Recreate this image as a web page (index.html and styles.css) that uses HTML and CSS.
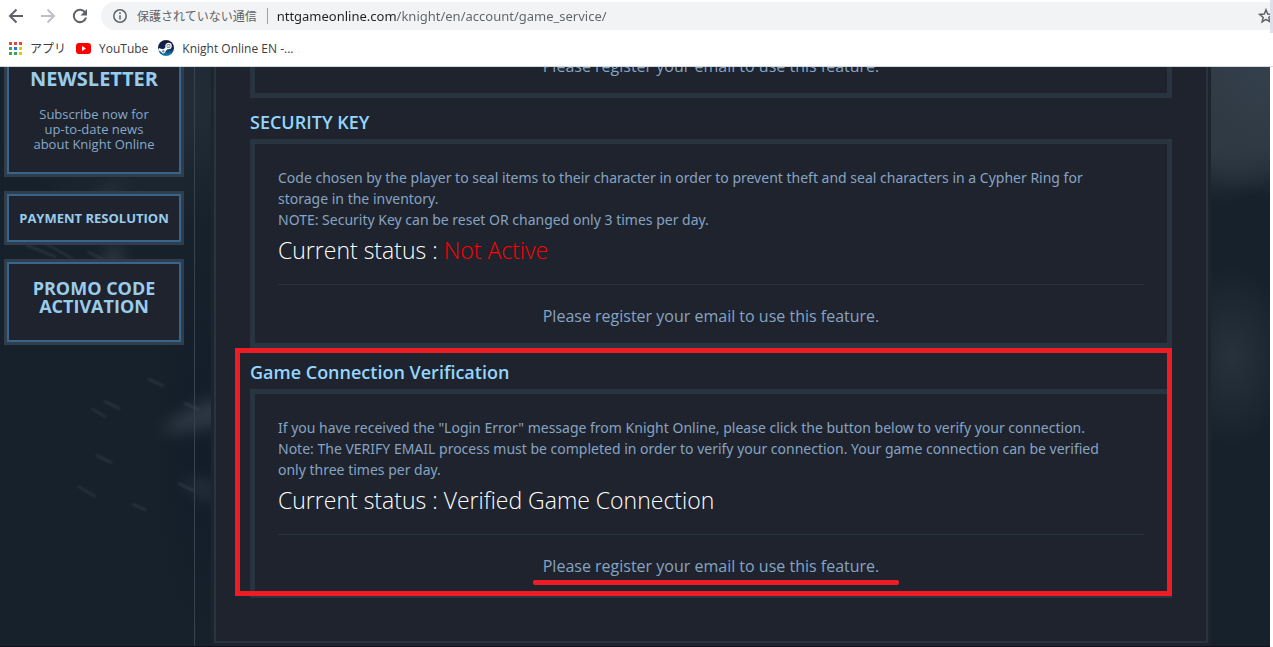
FILE: index.html
```
<!DOCTYPE html>
<html lang="en">
    <head>
        <meta charset="utf-8">
        <title>Knight Online - Game Service</title>
        <link rel="stylesheet" href="styles.css">
    </head>
    <body>
        <header class="browser">
            <div class="toolbar">
                <button class="nav_button" aria-label="Back">
                    <svg width="16" height="16" viewBox="0 0 16 16"><path d="M15 8H2M8.500 1.500L2 8l6.500 6.500" /></svg>
                </button>
                <button class="nav_button disabled" aria-label="Forward">
                    <svg width="16" height="16" viewBox="0 0 16 16"><path d="M1 8h13M7.500 1.500L14 8l-6.500 6.500" /></svg>
                </button>
                <button class="nav_button" aria-label="Reload">
                    <svg width="16" height="16" viewBox="0 0 16 16"><path d="M13.200 4.500A6.200 6.200 0 1 0 14 9.500" /><path class="fill" d="M15 1v6.500H8.500z" /></svg>
                </button>
                <div class="address">
                    <svg class="info" width="14" height="14" viewBox="0 0 14 14"><circle cx="7" cy="7" r="6.200" /><path d="M7 6.200v4.300M7 3.300v1.600" /></svg>
                    <label class="insecure" for="url">保護されていない通信</label>
                    <input type="text" class="url" id="url" value="nttgameonline.com/knight/en/account/game_service/">
                    <button class="star" aria-label="Bookmark">
                        <svg width="16" height="16" viewBox="0 0 16 16"><path d="M8 1.800l1.700 4.300 4.600.3-3.500 3 1.100 4.500L8 11.400l-3.900 2.500 1.100-4.500-3.500-3 4.600-.3z" /></svg>
                    </button>
                </div>
                <div class="edge"></div>
            </div>
            <nav class="bookmarks">
                <a href="#" class="bookmark apps">
                    <svg width="13" height="13" viewBox="0 0 13 13">
                        <path fill="#ea4335" d="M0 0h3v3H0zM5 0h3v3H5zM10 0h3v3h-3z" />
                        <path fill="#34a853" d="M0 5h3v3H0zM0 10h3v3H0zM5 10h3v3H5z" />
                        <path fill="#1a73e8" d="M5 5h3v3H5z" />
                        <path fill="#fbbc04" d="M10 5h3v3h-3zM10 10h3v3h-3z" />
                    </svg>
                    アプリ
                </a>
                <a href="#" class="bookmark youtube">
                    <svg width="15" height="11" viewBox="0 0 15 11"><rect width="15" height="11" rx="3" fill="#f00" /><path fill="#fff" d="M6 3l4 2.500L6 8z" /></svg>
                    YouTube
                </a>
                <a href="#" class="bookmark steam">
                    <svg width="16" height="16" viewBox="0 0 16 16">
                        <defs><linearGradient id="steam" x2="0" y2="1"><stop offset="0" stop-color="#111d3a" /><stop offset=".5" stop-color="#0e2350" /><stop offset="1" stop-color="#1a88bd" /></linearGradient></defs>
                        <circle cx="8" cy="8" r="8" fill="url(#steam)" />
                        <path d="M0.500 9.200l5 2 5-4.700" fill="none" stroke="#fff" stroke-width="2.800" />
                        <circle cx="5.300" cy="11.200" r="1.800" fill="#8795b3" stroke="#fff" />
                        <circle cx="10.500" cy="6" r="2.600" fill="#3a4a70" stroke="#fff" stroke-width="1.300" />
                        <circle cx="10.500" cy="6" r="1.500" fill="#d5dbe8" />
                    </svg>
                    Knight Online EN -...
                </a>
            </nav>
        </header>

        <div class="page">
            <svg class="streaks" viewBox="0 0 220 580" width="220" height="580">
                <g class="soft">
                    <path d="M160 364q25-26 65-34v26q-40 12-65 8z" />
                    <path d="M108 182q6 -14 12 0l4 26h-20z" />
                    <path d="M180 412l35 6-5 16z" />
                    <path d="M50 120q40 20 80-10l-20 24z" />
                </g>
                <g class="thin">
                    <path d="M26 178l30 12M45 176l28 16M88 185l24 12M148 312l16 7M104 334l16 8M92 342l14 8M184 336l16 7M96 388l16 8M78 419l18 11M132 437l14 6M178 416l16 8" />
                </g>
            </svg>
            <aside class="sidebar">
                <div class="card newsletter">
                    <h2>NEWSLETTER</h2>
                    <p>Subscribe now for<br>up-to-date news<br>about Knight Online</p>
                </div>
                <a href="#" class="card payment">PAYMENT RESOLUTION</a>
                <a href="#" class="card promo">PROMO CODE<br>ACTIVATION</a>
            </aside>
            <main class="panel">
                <div class="panel_inner">
                    <section class="service">
                        <div class="box">
                            <p class="register">Please register your email to use this feature.</p>
                        </div>
                    </section>
                    <section class="service">
                        <h3>SECURITY KEY</h3>
                        <div class="box">
                            <p class="description">Code chosen by the player to seal items to their character in order to prevent theft and seal characters in a Cypher Ring for storage in the inventory.<br>NOTE: Security Key can be reset OR changed only 3 times per day.</p>
                            <p class="status">Current status : <span class="inactive">Not Active</span></p>
                            <hr>
                            <p class="register">Please register your email to use this feature.</p>
                        </div>
                    </section>
                    <section class="service marked">
                        <h3>Game Connection Verification</h3>
                        <div class="box">
                            <p class="description">If you have received the "Login Error" message from Knight Online, please click the button below to verify your connection.<br>Note: The VERIFY EMAIL process must be completed in order to verify your connection. Your game connection can be verified only three times per day.</p>
                            <p class="status">Current status : Verified Game Connection</p>
                            <hr>
                            <p class="register"><span class="underlined">Please register your email to use this feature.</span></p>
                        </div>
                    </section>
                </div>
            </main>
        </div>
    </body>
</html>
```
FILE: styles.css
```
*{
    box-sizing: border-box;
}
body{
    margin: 0;
    height: 100vh;
    display: flex;
    flex-direction: column;
    overflow: hidden;
    background: #fff;
    font-family: "Open Sans", "Noto Sans CJK JP", sans-serif;
}
h2, h3, p{
    margin: 0;
}
button{
    border: 0;
    padding: 0;
    background: none;
}
a{
    text-decoration: none;
}
svg{
    display: block;
    flex: none;
}

/* Browser bars */
.browser{
    border-bottom: 1px solid #d5dade;
    font-size: 12px;
    color: #3c4043;
}
.toolbar{
    height: 33px;
    display: flex;
    align-items: flex-start;
    padding-left: 8px;
}
.nav_button{
    height: 32px;
    margin-right: 16px;
}
.nav_button svg{
    fill: none;
    stroke: #5f6368;
    stroke-width: 2;
}
.nav_button .fill{
    fill: #5f6368;
    stroke: none;
}
.disabled svg{
    stroke: #bdc1c6;
}
.address{
    flex: 1;
    height: 28px;
    margin: 2px 0 0 -3px;
    padding-left: 12px;
    display: flex;
    align-items: center;
    background: #f1f3f4;
    border-radius: 14px 0 0 14px;
}
.info{
    fill: none;
    stroke: #5f6368;
    stroke-width: 1.5;
}
.insecure{
    margin-left: 10px;
    padding-right: 10px;
    border-right: 1px solid #9aa0a6;
    font-family: "Noto Sans CJK JP", sans-serif;
    line-height: 16px;
    color: #5f6368;
}
.url{
    flex: 1;
    min-width: 0;
    margin-left: 9px;
    padding: 0;
    border: 0;
    /* host name darker than the path */
    background: linear-gradient(to right, #202124 119px, #5f6368 119px);
    background-clip: text;
    -webkit-background-clip: text;
    font-family: "Noto Sans", sans-serif;
    font-size: 13px;
    color: transparent;
}
.star{
    width: 12px;
    overflow: hidden;
}
.star svg{
    fill: none;
    stroke: #5f6368;
    stroke-width: 1.5;
}
.edge{
    width: 3px;
    height: 33px;
    background: #dee1ea;
}
.bookmarks{
    height: 33px;
    display: flex;
    align-items: center;
    gap: 10px;
    padding: 0 0 3px 9px;
}
.bookmark{
    display: flex;
    align-items: center;
    gap: 8px;
    color: #3c4043;
}

/* Game site */
.page{
    flex: 1;
    min-height: 0;
    margin-right: 3px;
    display: flex;
    align-items: flex-start;
    position: relative;
    overflow: hidden;
    border-bottom: 1px solid #10131f;
    background:
        radial-gradient(ellipse 130px 130px at 100% 0, #34404b 0, #2f3a45 60%, transparent 100%),
        radial-gradient(ellipse 90px 120px at 96% 3%, #303b46 50%, transparent 100%),
        radial-gradient(ellipse 60px 90px at 97% 50%, #27323d 0, transparent 100%),
        radial-gradient(ellipse 180px 130px at 170px 30px, #242e38 0, transparent 100%),
        radial-gradient(ellipse 50px 200px at 200px 380px, #131d29 0, transparent 100%),
        #17212c;
}
.streaks{
    position: absolute;
    left: 0;
    top: 0;
}
.soft{
    fill: #56616c;
    opacity: 0.4;
    filter: blur(8px);
}
.thin{
    fill: none;
    stroke: #5c6873;
    stroke-width: 2;
    opacity: 0.3;
    filter: blur(1px);
}
.sidebar{
    width: 195px;
    flex: none;
    align-self: stretch;
    position: relative;
    display: flex;
    flex-direction: column;
    gap: 14px;
    padding: 0 10px 0 4px;
    border-right: 1px solid #33444f;
}
.card{
    border: 3px solid #2f3e4a;
    outline: 2px solid #38658b;
    outline-offset: -5px;
    background: #1e232e;
    text-align: center;
    font-weight: bold;
    color: #9accec;
}
.newsletter{
    margin-top: -27px;
    padding: 24px 10px 22px;
}
.newsletter h2{
    font-size: 20px;
    line-height: 24px;
}
.newsletter p{
    margin-top: 16px;
    font-size: 13px;
    font-weight: normal;
    line-height: 15px;
    color: #87a9c9;
}
.payment{
    padding: 14px 0;
    font-size: 13px;
    line-height: 20px;
}
.promo{
    padding: 17px 10px 27px;
    font-size: 18px;
    line-height: 18px;
}
.panel{
    flex: 1;
    position: relative;
    margin: -58px 59px 0 16px;
    padding: 3px;
    background: #1e232e;
}
.panel_inner{
    padding: 12px 34px 43px;
    border: 2px solid #28343f;
}
.service h3{
    padding: 12px 0 5px;
    font-size: 18px;
    font-weight: 600;
    line-height: 24px;
    color: #94d6ff;
}
.box{
    padding: 23px 23px 15px;
    border: 5px solid #28343f;
}
.description{
    padding-right: 24px;
    font-family: "Noto Sans", sans-serif;
    font-size: 14px;
    line-height: 21px;
    color: #87a3c2;
}
.status{
    font-size: 23px;
    font-weight: 300;
    line-height: 40px;
    color: #fff;
}
.inactive{
    color: #f00;
}
hr{
    margin: 14px 0 19px;
    border: 0;
    border-top: 1px solid #28343f;
}
.register{
    font-size: 16px;
    line-height: 24px;
    text-align: center;
    color: #87a3c2;
}

/* Red marks drawn over the last service */
.marked, .underlined{
    position: relative;
}
.marked::after{
    content: "";
    position: absolute;
    top: 0;
    right: 0;
    bottom: 2px;
    left: -15px;
    border: 5px solid #ee1c24;
}
.underlined::after{
    content: "";
    position: absolute;
    right: -20px;
    bottom: -8px;
    left: -10px;
    height: 5px;
    border-radius: 2px;
    background: #ee1c24;
}
```
